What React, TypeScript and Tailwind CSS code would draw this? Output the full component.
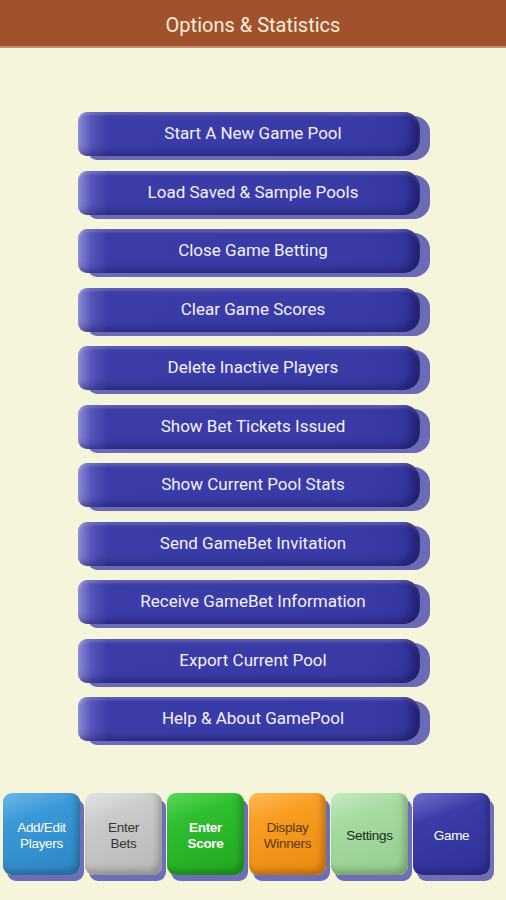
import React from "react";

const items = [
  "Start A New Game Pool",
  "Load Saved & Sample Pools",
  "Close Game Betting",
  "Clear Game Scores",
  "Delete Inactive Players",
  "Show Bet Tickets Issued",
  "Show Current Pool Stats",
  "Send GameBet Invitation",
  "Receive GameBet Information",
  "Export Current Pool",
  "Help & About GamePool",
];

const tabs: { l1: string; l2?: string; cls: string }[] = [
  {
    l1: "Add/Edit",
    l2: "Players",
    cls: "bg-[linear-gradient(160deg,#6cb8ea_0%,#3a98d6_30%,#2f86c4_100%)] text-white",
  },
  {
    l1: "Enter",
    l2: "Bets",
    cls: "bg-[linear-gradient(160deg,#e4e4e4_0%,#cacaca_30%,#b8b8b8_100%)] text-[#333333]",
  },
  {
    l1: "Enter",
    l2: "Score",
    cls: "bg-[linear-gradient(160deg,#5ad85a_0%,#2fbe2f_30%,#22a822_100%)] text-white font-bold",
  },
  {
    l1: "Display",
    l2: "Winners",
    cls: "bg-[linear-gradient(160deg,#ffbb55_0%,#f89c22_30%,#ea8a12_100%)] text-[#5a3808]",
  },
  {
    l1: "Settings",
    cls: "bg-[linear-gradient(160deg,#c4ecc0_0%,#a6dba0_30%,#94cc8e_100%)] text-[#1e2a1e]",
  },
  {
    l1: "Game",
    cls: "bg-[linear-gradient(160deg,#7070cc_0%,#3c3ca8_30%,#30309a_100%)] text-white",
  },
];

export default function App() {
  return (
    <div className="w-[506px] h-[900px] bg-[#f5f5dc] flex flex-col overflow-hidden">
      <div className="h-[48px] bg-[#a0522d] border-b-[2px] border-[#c98e6a] flex items-center justify-center pt-[3px]">
        <span className="text-[#f7ecd8] text-[20px] font-['Roboto',sans-serif]">
          Options &amp; Statistics
        </span>
      </div>

      <div className="flex flex-col gap-[14.5px] pl-[78px] pt-[64px]">
        {items.map((t) => (
          <div
            key={t}
            className="w-[342px] h-[44px] pl-[8px] rounded-l-[9px] rounded-r-[16px] flex items-center justify-center shadow-[10px_4px_0_#6a6ab6,inset_-8px_-3px_8px_rgba(10,10,60,0.45),inset_0_3px_3px_rgba(255,255,255,0.22)] bg-[linear-gradient(90deg,#8a8ad6_0%,#5454b8_4%,#3c3ca8_9%,#3a3aa6_85%,#34349e_100%)]"
          >
            <span className="text-[#f2f2ff] text-[17px] font-['Roboto',sans-serif]">
              {t}
            </span>
          </div>
        ))}
      </div>

      <div className="flex gap-[5px] pl-[3px] mt-[52px]">
        {tabs.map((tab, i) => (
          <div
            key={i}
            className={`w-[77px] h-[82px] pt-[3px] rounded-[9px] flex flex-col items-center justify-center leading-[16px] text-[13.5px] tracking-[-0.3px] font-['Liberation_Sans',Arial,sans-serif] shadow-[4px_6px_0_#6d6db8,inset_-4px_-5px_6px_rgba(0,0,0,0.22)] ${tab.cls}`}
          >
            <span>{tab.l1}</span>
            {tab.l2 && <span>{tab.l2}</span>}
          </div>
        ))}
      </div>
    </div>
  );
}
